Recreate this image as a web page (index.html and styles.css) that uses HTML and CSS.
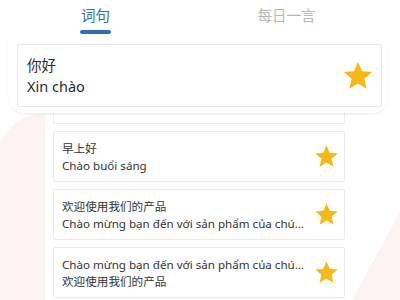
FILE: index.html
```html
<!DOCTYPE html>
<html>
  <head>
    <meta charset="UTF-8">
    <title>词句</title>
    <link rel="stylesheet" href="styles.css">
  </head>
  <body>
    <div id="page">

      <div class="tabs">
        <div class="tab active">
          <span>词句</span>
          <i class="bar"></i>
        </div>
        <div class="tab">
          <span>每日一言</span>
        </div>
      </div>

      <div class="pinned">
        <div class="card big">
          <div class="words">
            <p>你好</p>
            <p>Xin chào</p>
          </div>
          <svg class="star" viewBox="0 0 24 24"><path d="M12 17.27L18.18 21l-1.64-7.03L22 9.24l-7.19-.61L12 2 9.19 8.63 2 9.24l5.46 4.73L5.82 21z"/></svg>
        </div>
      </div>

      <div class="list">
        <div class="card">
          <div class="words">
            <p>你好</p>
            <p>Xin chào</p>
          </div>
          <svg class="star" viewBox="0 0 24 24"><path d="M12 17.27L18.18 21l-1.64-7.03L22 9.24l-7.19-.61L12 2 9.19 8.63 2 9.24l5.46 4.73L5.82 21z"/></svg>
        </div>
        <div class="card">
          <div class="words">
            <p>早上好</p>
            <p>Chào buổi sáng</p>
          </div>
          <svg class="star" viewBox="0 0 24 24"><path d="M12 17.27L18.18 21l-1.64-7.03L22 9.24l-7.19-.61L12 2 9.19 8.63 2 9.24l5.46 4.73L5.82 21z"/></svg>
        </div>
        <div class="card">
          <div class="words">
            <p>欢迎使用我们的产品</p>
            <p>Chào mừng bạn đến với sản phẩm của chúng tôi</p>
          </div>
          <svg class="star" viewBox="0 0 24 24"><path d="M12 17.27L18.18 21l-1.64-7.03L22 9.24l-7.19-.61L12 2 9.19 8.63 2 9.24l5.46 4.73L5.82 21z"/></svg>
        </div>
        <div class="card">
          <div class="words">
            <p>Chào mừng bạn đến với sản phẩm của chúng tôi</p>
            <p>欢迎使用我们的产品</p>
          </div>
          <svg class="star" viewBox="0 0 24 24"><path d="M12 17.27L18.18 21l-1.64-7.03L22 9.24l-7.19-.61L12 2 9.19 8.63 2 9.24l5.46 4.73L5.82 21z"/></svg>
        </div>
      </div>

    </div>
  </body>
</html>
```

FILE: styles.css
```css
 * {
	margin: 0px;
	padding: 0px;
	box-sizing: border-box;
 }
 html, body {
	width: 400px;
	height: 300px;
	overflow: hidden;
 }
 body {
	font-family: "Noto Sans", "Noto Sans CJK SC", sans-serif;
	color: #333333;
	background-color: #ffffff;
	/* the two faint pink shapes behind the list */
	background-image:
		radial-gradient(circle 49px at 45px 49px, #fdf3f3 98%, transparent 100%),
		linear-gradient(#fdf3f3, #fdf3f3),
		linear-gradient(to bottom right, transparent 50%, #fdf3f3 50%),
		linear-gradient(#fdf3f3, #fdf3f3);
	background-size: 45px 49px, 45px 200px, 48px 88px, 48px 10px;
	background-position: 0px 113px, 0px 162px, 352px 212px, 352px 300px;
	background-repeat: no-repeat;
 }
 #page {
	height: 100%;
 }

 .tabs {
	display: flex;
	width: 382px;
	height: 38px;
 }
 .tab {
	flex: 1;
	display: flex;
	flex-direction: column;
	align-items: center;
	padding-top: 4px;
	font-size: 14.5px;
	line-height: 22px;
	color: #b6b6b6;
 }
 .tab.active {
	color: #2f6fb3;
 }
 .bar {
	display: block;
	width: 31px;
	height: 4px;
	margin-top: 4px;
	border-radius: 2px;
	background-color: #2f6fb3;
 }

 .pinned {
	position: relative;
	z-index: 1;
	width: 380px;
	margin-left: 8px;
	padding: 6px 6px 6px 9px;
	background-color: #ffffff;
	border-radius: 0px 0px 16px 16px;
	box-shadow: 0px 2px 3px -1px rgba(0, 0, 0, 0.09);
 }

 .card {
	display: flex;
	align-items: center;
	background-color: #ffffff;
	border: 1px solid #ebebeb;
	border-radius: 2px;
 }
 .words {
	flex: 1;
	min-width: 0;
 }
 .words p {
	white-space: nowrap;
	overflow: hidden;
	text-overflow: ellipsis;
 }
 .star {
	flex: none;
	fill: #f9b815;
 }

 .card.big {
	height: 63px;
	padding: 0px 6px 0px 9px;
	border-color: #e8e8e8;
 }
 .card.big .words p {
	font-size: 14.5px;
	line-height: 21px;
	color: #2b2b2b;
 }
 .card.big .star {
	width: 34px;
	height: 34px;
 }

 .list {
	display: flex;
	flex-direction: column;
	gap: 7px;
	width: 292px;
	margin-left: 53px;
	margin-top: -40px;
 }
 .list .card {
	height: 51px;
	padding: 0px 4px 0px 8px;
 }
 .list .words p {
	font-size: 11.6px;
	line-height: 17px;
 }
 .list .star {
	width: 27px;
	height: 27px;
	margin-left: 6px;
 }
```
